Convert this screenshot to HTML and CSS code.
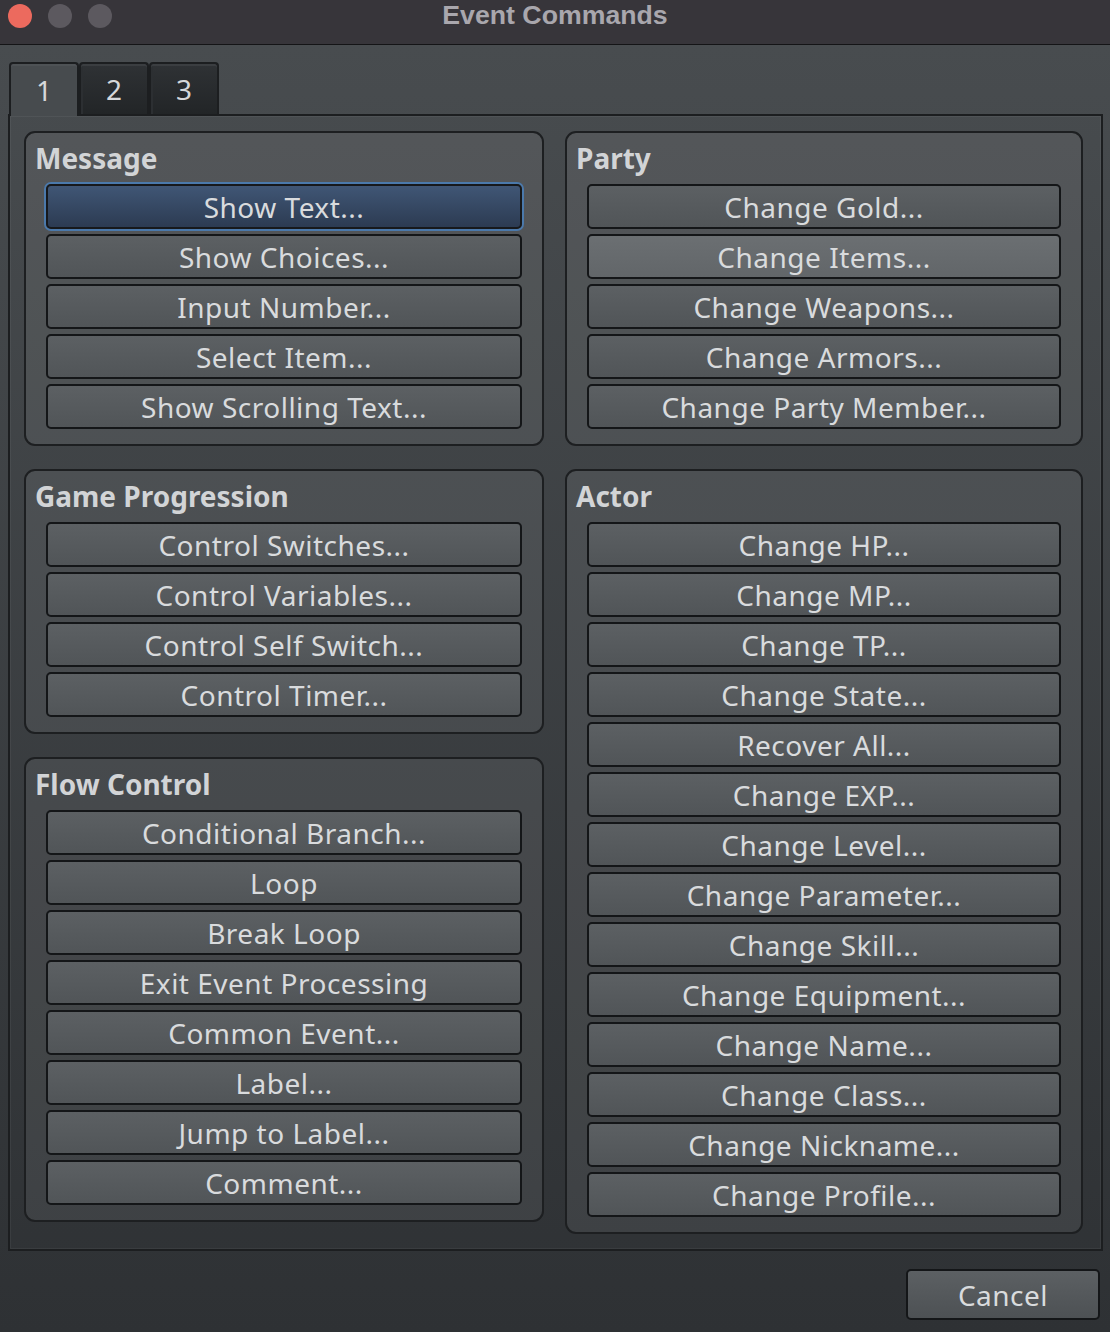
FILE: index.html
```html
<!DOCTYPE html>
<html lang="en">
<head>
<meta charset="utf-8">
<title>Event Commands</title>
<link rel="stylesheet" href="styles.css">
</head>
<body>
<div class="window">
  <div class="titlebar">
    <div class="lights">
      <span class="light red"></span>
      <span class="light gray"></span>
      <span class="light gray"></span>
    </div>
    <div class="title">Event Commands</div>
    <div></div>
  </div>
  <div class="content">
    <div class="tabs">
      <div class="tab active">1</div>
      <div class="tab">2</div>
      <div class="tab">3</div>
    </div>
    <div class="pane">
      <div class="col">
        <section class="group">
          <div class="group-title">Message</div>
          <div class="btn focus">Show Text...</div>
          <div class="btn">Show Choices...</div>
          <div class="btn">Input Number...</div>
          <div class="btn">Select Item...</div>
          <div class="btn">Show Scrolling Text...</div>
        </section>
        <section class="group">
          <div class="group-title">Game Progression</div>
          <div class="btn">Control Switches...</div>
          <div class="btn">Control Variables...</div>
          <div class="btn">Control Self Switch...</div>
          <div class="btn">Control Timer...</div>
        </section>
        <section class="group">
          <div class="group-title">Flow Control</div>
          <div class="btn">Conditional Branch...</div>
          <div class="btn">Loop</div>
          <div class="btn">Break Loop</div>
          <div class="btn">Exit Event Processing</div>
          <div class="btn">Common Event...</div>
          <div class="btn">Label...</div>
          <div class="btn">Jump to Label...</div>
          <div class="btn">Comment...</div>
        </section>
      </div>
      <div class="col">
        <section class="group">
          <div class="group-title">Party</div>
          <div class="btn">Change Gold...</div>
          <div class="btn hover">Change Items...</div>
          <div class="btn">Change Weapons...</div>
          <div class="btn">Change Armors...</div>
          <div class="btn">Change Party Member...</div>
        </section>
        <section class="group">
          <div class="group-title">Actor</div>
          <div class="btn">Change HP...</div>
          <div class="btn">Change MP...</div>
          <div class="btn">Change TP...</div>
          <div class="btn">Change State...</div>
          <div class="btn">Recover All...</div>
          <div class="btn">Change EXP...</div>
          <div class="btn">Change Level...</div>
          <div class="btn">Change Parameter...</div>
          <div class="btn">Change Skill...</div>
          <div class="btn">Change Equipment...</div>
          <div class="btn">Change Name...</div>
          <div class="btn">Change Class...</div>
          <div class="btn">Change Nickname...</div>
          <div class="btn">Change Profile...</div>
        </section>
      </div>
    </div>
    <div class="footer">
      <div class="btn cancel">Cancel</div>
    </div>
  </div>
</div>
</body>
</html>
```

FILE: styles.css
```css
* { box-sizing: border-box; }

html, body {
  margin: 0;
  padding: 0;
}

body {
  width: 1110px;
  height: 1332px;
  overflow: hidden;
  font-family: "Noto Sans", "Open Sans", sans-serif;
  color: #d9dbdd;
  background: #2e3134;
}

.window {
  width: 1110px;
  height: 1332px;
  display: flex;
  flex-direction: column;
  background: #2e3134;
}

.titlebar {
  height: 45px;
  flex: none;
  background: #37353a;
  border-bottom: 1px solid #141416;
  display: grid;
  grid-template-columns: 1fr auto 1fr;
  align-items: start;
}

.lights {
  display: flex;
  gap: 16px;
  padding: 4px 0 0 8px;
}

.light {
  width: 24px;
  height: 24px;
  border-radius: 50%;
  background: #5c595f;
}

.light.red { background: #ec6a5e; }

.title {
  font-family: "Liberation Sans", Arial, sans-serif;
  font-weight: bold;
  font-size: 26.7px;
  line-height: 30px;
  color: #a9a7ad;
}

.content {
  flex: 1;
  display: flex;
  flex-direction: column;
  padding-top: 17px;
  background: linear-gradient(#484c4f 0%, #2e3134 100%);
}

.tabs {
  display: flex;
  align-items: flex-end;
  margin-left: 9px;
  margin-bottom: -2px;
  height: 54px;
  position: relative;
  z-index: 1;
}

.tab {
  width: 70px;
  height: 52px;
  margin-bottom: 2px;
  border: 2px solid #1c1e20;
  border-bottom: none;
  border-radius: 4px 4px 0 0;
  background: linear-gradient(#2f3235, #222527);
  box-shadow: inset 0 2px 0 #3b3e41, inset 2px 0 0 #2c2f32;
  display: flex;
  align-items: center;
  justify-content: center;
  font-size: 28px;
  color: #d6d8da;
}

.tab.active {
  height: 54px;
  margin-bottom: 0;
  background: #474b4e;
  box-shadow: inset 0 2px 0 #4e5255;
}

.pane {
  margin-left: 8px;
  width: 1095px;
  border: 2px solid #1c1e20;
  box-shadow: inset 0 0 0 1px rgba(255, 255, 255, 0.05);
  padding: 15px 18px 15px 14px;
  display: grid;
  grid-template-columns: 520px 518px;
  column-gap: 21px;
  align-items: start;
}

.col {
  display: flex;
  flex-direction: column;
  gap: 23px;
}

.group {
  border: 2px solid #1d1f21;
  border-radius: 11px;
  background: rgba(255, 255, 255, 0.07);
  padding: 8px 20px 15px 20px;
  display: flex;
  flex-direction: column;
  gap: 5px;
}

.group-title {
  font-weight: bold;
  font-size: 28px;
  line-height: 34px;
  color: #d2d4d6;
  margin: 0 0 4px -11px;
}

.btn {
  height: 45px;
  border: 2px solid #141618;
  border-radius: 5px;
  background: linear-gradient(#5c6063, #515558);
  display: flex;
  align-items: center;
  justify-content: center;
  font-size: 28px;
  line-height: 1;
  letter-spacing: 0.5px;
  color: #d9dbdd;
  white-space: nowrap;
}

.btn.hover {
  background: linear-gradient(#6b6f72, #626669);
}

.btn.focus {
  background: linear-gradient(#405675, #2c3b52);
  box-shadow: 0 0 0 2px #4b79ab;
  border-color: #17191c;
}

.footer {
  display: flex;
  justify-content: flex-end;
  padding: 18px 10px 0 0;
}

.btn.cancel {
  width: 194px;
  height: 51px;
  background: linear-gradient(#5c6063, #4d5154);
}
```
